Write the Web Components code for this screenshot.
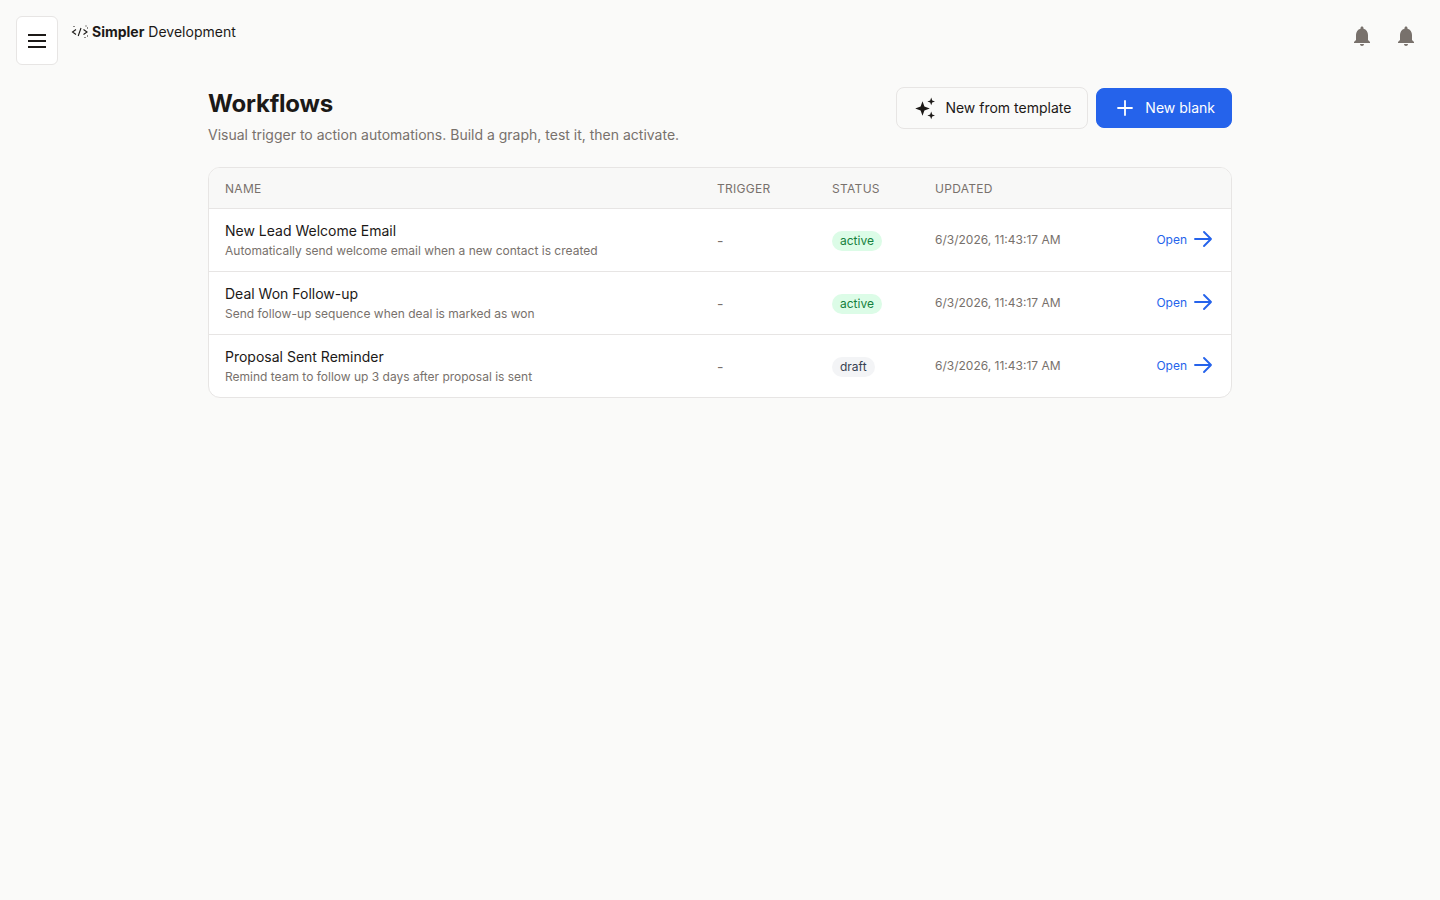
<!doctype html>
<html lang="en">
<head>
<meta charset="utf-8">
<title>Workflows</title>
<style>
  html, body { margin: 0; height: 100%; }
  body { background: #fafaf9; color: #1c1917; font-family: Inter, "Liberation Sans", sans-serif; }
</style>
</head>
<body>
<app-shell>
  <top-bar slot="bar"></top-bar>
  <page-head title="Workflows" sub="Visual trigger to action automations. Build a graph, test it, then activate.">
    <ds-btn icon="sparkles">New from template</ds-btn>
    <ds-btn variant="primary" icon="plus">New blank</ds-btn>
  </page-head>
  <wf-table>
    <wf-row name="New Lead Welcome Email" desc="Automatically send welcome email when a new contact is created" status="active" updated="6/3/2026, 11:43:17 AM"></wf-row>
    <wf-row name="Deal Won Follow-up" desc="Send follow-up sequence when deal is marked as won" status="active" updated="6/3/2026, 11:43:17 AM"></wf-row>
    <wf-row name="Proposal Sent Reminder" desc="Remind team to follow up 3 days after proposal is sent" status="draft" updated="6/3/2026, 11:43:17 AM"></wf-row>
  </wf-table>
</app-shell>

<script>
// Icones partagees
const ICONS = {
  sparkles: '<svg width="24" height="24" viewBox="0 0 24 24" fill="currentColor"><path d="M9.5 5.2l1.9 5.4 5.4 1.9-5.4 1.9-1.9 5.4-1.9-5.4-5.4-1.9 5.4-1.9z"/><path d="M18.2 1.6l1 2.8 2.8 1-2.8 1-1 2.8-1-2.8-2.8-1 2.8-1z"/><path d="M18.2 15.6l1 2.8 2.8 1-2.8 1-1 2.8-1-2.8-2.8-1 2.8-1z"/></svg>',
  plus: '<svg width="24" height="24" viewBox="0 0 24 24" fill="none" stroke="currentColor" stroke-width="1.8" stroke-linecap="round"><path d="M12 5v14M5 12h14"/></svg>',
  arrow: '<svg width="24" height="24" viewBox="0 0 24 24" fill="none" stroke="currentColor" stroke-width="1.9" stroke-linecap="round" stroke-linejoin="round"><path d="M4 12h16M13 5l7 7-7 7"/></svg>',
  menu: '<svg width="24" height="24" viewBox="0 0 24 24" fill="none" stroke="currentColor" stroke-width="2"><path d="M3 6h18M3 12h18M3 18h18"/></svg>',
  bell: '<svg width="24" height="24" viewBox="0 0 24 24" fill="currentColor"><path d="M12 22c1.1 0 2-.9 2-2h-4c0 1.100.9 2 2 2zm6-6v-5c0-3.070-1.640-5.640-4.500-6.320V4c0-.830-.670-1.500-1.500-1.500s-1.500.670-1.500 1.500v.680C7.630 5.360 6 7.920 6 11v5l-2 2v1h16v-1l-2-2z"/></svg>'
};

class AppShell extends HTMLElement {
  constructor() {
    super();
    this.attachShadow({ mode: 'open' }).innerHTML = `
      <style>
        :host { display: block; }
        header { height: 88px; }
        main { width: 1024px; margin: 0 auto; }
      </style>
      <header><slot name="bar"></slot></header>
      <main><slot></slot></main>`;
  }
}

class TopBar extends HTMLElement {
  constructor() {
    super();
    this.attachShadow({ mode: 'open' }).innerHTML = `
      <style>
        :host { display: flex; align-items: flex-start; padding: 16px 22px 0 16px; }
        button {
          width: 42px; height: 49px; padding: 0; display: flex; align-items: center; justify-content: center;
          background: #fff; border: 1px solid #e7e5e4; border-radius: 6px; color: #1c1917;
        }
        .logo { display: flex; align-items: center; gap: 3px; margin: 6px 0 0 13px; height: 20px; font-size: 14px; line-height: 20px; color: #1c1917; }
        .logo svg { display: block; }
        b { font-weight: 700; }
        .bells { margin-left: auto; display: flex; gap: 20px; margin-top: 8px; color: #78716c; }
        .bells svg { display: block; }
      </style>
      <button aria-label="Menu">${ICONS.menu}</button>
      <div class="logo">
        <svg width="18" height="14" viewBox="0 0 18 14" fill="none" stroke="#1c1917" stroke-width="1.100">
          <path d="M5 4.500L1.500 7 5 9.500M7.200 11L10 3M12.500 4.500L16 7l-3.500 2.500"/>
          <path d="M2.500 1.500h1M14.500 1h1M16 3h1M13.500 12.500h1M16 11h1" stroke-dasharray="1 1"/>
        </svg>
        <span><b>Simpler</b> Development</span>
      </div>
      <div class="bells">${ICONS.bell}${ICONS.bell}</div>`;
  }
}

class PageHead extends HTMLElement {
  constructor() {
    super();
    this.attachShadow({ mode: 'open' }).innerHTML = `
      <style>
        :host { display: flex; justify-content: space-between; align-items: flex-start; height: 79px; }
        h1 { margin: 0; font-size: 24px; line-height: 32px; font-weight: 700; letter-spacing: -0.2px; color: #1c1917; }
        p { margin: 5px 0 0; font-size: 14px; line-height: 20px; color: #78716c; }
        .actions { display: flex; gap: 8px; align-items: center; height: 42px; margin-top: -1px; }
      </style>
      <div><h1></h1><p></p></div>
      <div class="actions"><slot></slot></div>`;
    this.shadowRoot.querySelector('h1').textContent = this.getAttribute('title');
    this.shadowRoot.querySelector('p').textContent = this.getAttribute('sub');
  }
}

class DsBtn extends HTMLElement {
  constructor() {
    super();
    this.attachShadow({ mode: 'open' }).innerHTML = `
      <style>
        :host { display: inline-block; }
        button {
          font: inherit; font-size: 14px; line-height: 20px; display: inline-flex; align-items: center; gap: 8px;
          height: 42px; padding: 0 16px; border: 1px solid #e7e5e4; border-radius: 8px;
          background: #fafaf9; color: #1c1917; box-sizing: border-box;
        }
        :host([variant="primary"]) button { height: 40px; background: #2563eb; border-color: #2563eb; color: #fff; }
        svg { display: block; }
      </style>
      <button type="button">${ICONS[this.getAttribute('icon')] || ''}<slot></slot></button>`;
  }
}

// Colonnes communes a l'entete et aux lignes
const COLS = 'grid-template-columns: 492px 115px 103px 1fr auto;';

class WfTable extends HTMLElement {
  constructor() {
    super();
    this.attachShadow({ mode: 'open' }).innerHTML = `
      <style>
        :host { display: block; background: #fff; border: 1px solid #e7e5e4; border-radius: 12px; overflow: hidden; }
        .head {
          display: grid; ${COLS} align-items: center; height: 40px; background: #f8f8f7;
          font-size: 12px; letter-spacing: 0.3px; color: #78716c; padding-right: 16px;
        }
        .head div { padding-left: 16px; }
      </style>
      <div class="head"><div>NAME</div><div>TRIGGER</div><div>STATUS</div><div>UPDATED</div></div>
      <slot></slot>`;
  }
}

class WfRow extends HTMLElement {
  constructor() {
    super();
    const a = n => this.getAttribute(n);
    this.attachShadow({ mode: 'open' }).innerHTML = `
      <style>
        :host { display: grid; ${COLS} align-items: center; height: 62px; border-top: 1px solid #e7e5e4; padding-right: 16px; }
        .cell { padding-left: 16px; }
        .name { font-size: 14px; line-height: 20px; color: #1c1917; }
        .desc { font-size: 12px; line-height: 16px; margin-top: 2px; color: #78716c; }
        .trigger { font-size: 14px; color: #78716c; }
        .date { font-size: 12px; color: #78716c; margin-top: -2px; }
        .pill { display: inline-block; font-size: 12px; line-height: 16px; padding: 2px 8px; border-radius: 999px; }
        .pill.active { background: #dcfce7; color: #15803d; }
        .pill.draft { background: #f3f4f6; color: #374151; }
        a { display: flex; align-items: center; gap: 4px; font-size: 12px; color: #2563eb; text-decoration: none; margin-top: -2px; }
        a svg { display: block; }
      </style>
      <div class="cell"><div class="name">${a('name')}</div><div class="desc">${a('desc')}</div></div>
      <div class="cell trigger">-</div>
      <div class="cell"><span class="pill ${a('status')}">${a('status')}</span></div>
      <div class="cell date">${a('updated')}</div>
      <a href="#">Open ${ICONS.arrow}</a>`;
  }
}

customElements.define('app-shell', AppShell);
customElements.define('top-bar', TopBar);
customElements.define('page-head', PageHead);
customElements.define('ds-btn', DsBtn);
customElements.define('wf-table', WfTable);
customElements.define('wf-row', WfRow);
</script>
</body>
</html>
